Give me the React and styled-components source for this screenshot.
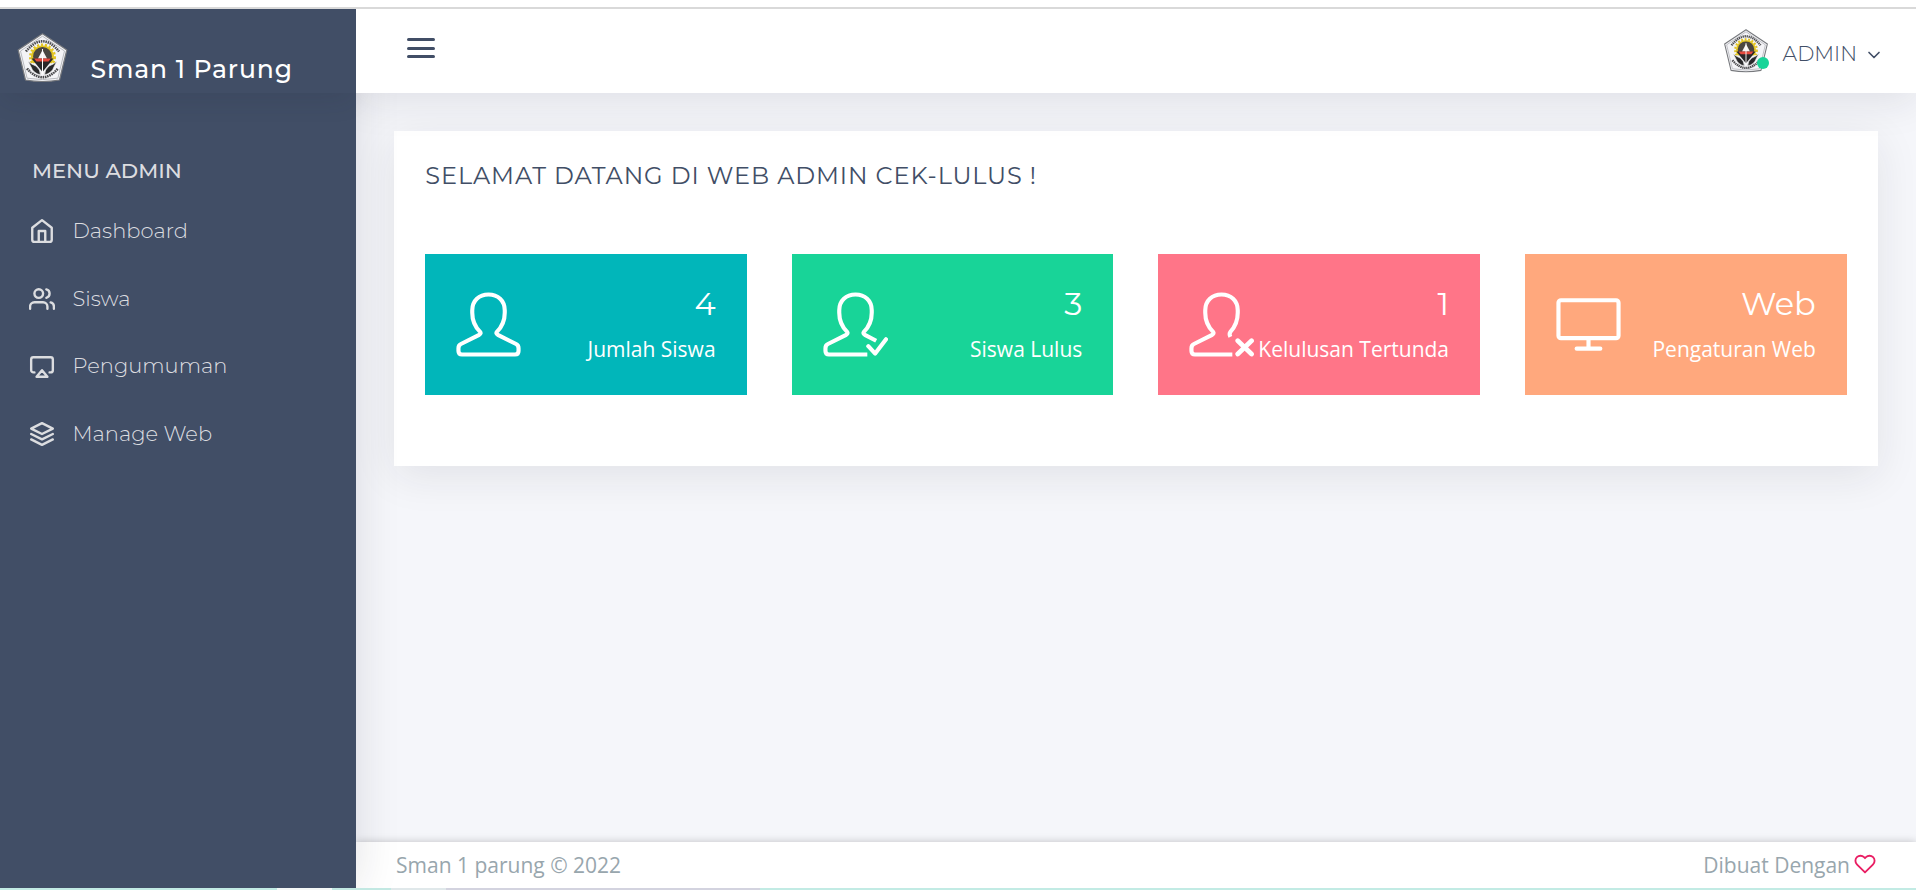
import React from "react";
import styled, { createGlobalStyle } from "styled-components";
import { ChevronDown } from "lucide-react";
import { FiHome, FiUsers, FiAirplay, FiLayers, FiHeart } from "react-icons/fi";

const heading = `Montserrat, Inter, "Open Sans", sans-serif`;
const body = `"Open Sans", "Noto Sans", sans-serif`;

const GlobalStyle = createGlobalStyle`
  * { box-sizing: border-box; }
  body { margin: 0; background: #f5f6fa; font-family: ${body}; overflow: hidden; }
  h1, h2, p { margin: 0; font-weight: 400; }
`;

const Page = styled.div`
  height: 890px;
  display: flex;
  flex-direction: column;
`;
const TopRule = styled.div`
  position: relative;
  z-index: 4;
  height: 9px;
  flex: none;
  background: #fff;
  border-bottom: 2px solid #d9d9d9;
`;
const Shell = styled.div`
  flex: 1;
  display: flex;
  min-height: 0;
`;
const Sidebar = styled.aside`
  position: relative;
  z-index: 2;
  width: 356px;
  flex: none;
  background: #414e66;
  box-shadow: 0 0 42px rgba(31, 30, 47, 0.13);
`;
const Brand = styled.div`
  height: 84px;
  display: flex;
  align-items: flex-start;
  padding: 24px 0 0 17px;
  gap: 22.5px;
  box-shadow: 0 10px 26px -4px rgba(32, 40, 55, 0.13);
`;
const BrandName = styled.span`
  font: 500 25px/32px ${heading};
  letter-spacing: 0.9px;
  padding-top: 20px;
  color: #fff;
  white-space: nowrap;
`;
const MenuTitle = styled.h2`
  font: 500 21px/28px ${heading};
  letter-spacing: 0;
  color: #dcdde0;
  margin: 64px 0 12px 32px;
`;
const MenuItem = styled.a`
  height: 67.7px;
  display: flex;
  align-items: center;
  gap: 17.5px;
  padding-left: 29px;
  color: #dcdde0;
  font: 300 21px/28px ${heading};
  svg { position: relative; top: 0.5px; }
`;
const Menu = styled.nav`
  display: flex;
  flex-direction: column;
`;
const Main = styled.div`
  flex: 1;
  min-width: 0;
  display: flex;
  flex-direction: column;
`;
const Header = styled.header`
  position: relative;
  z-index: 3;
  height: 84px;
  flex: none;
  background: #fff;
  display: flex;
  justify-content: space-between;
  box-shadow: 0 8px 40px rgba(31, 30, 47, 0.1);
  clip-path: inset(0 0 -80px 0);
`;
const MenuToggle = styled.button`
  border: 0;
  background: none;
  padding: 0;
  margin: 29px 0 0 51px;
  width: 28px;
  height: 20px;
  display: flex;
  flex-direction: column;
  justify-content: space-between;
`;
const Bar = styled.span`
  height: 3px;
  border-radius: 2px;
  background: #414e66;
`;
const Account = styled.div`
  display: flex;
  align-items: flex-start;
  padding: 20px 32px 0 0;
  color: #414e66;
`;
const Avatar = styled.div`
  position: relative;
  width: 44px;
  height: 44px;
`;
const Status = styled.i`
  position: absolute;
  right: -1px;
  bottom: 4px;
  width: 12px;
  height: 12px;
  border-radius: 50%;
  background: #18d498;
`;
const AccountName = styled.span`
  font: 300 20.7px/28px ${heading};
  margin: 11px 7px 0 15px;
`;
const Chevron = styled(ChevronDown)`
  margin-top: 16px;
`;
const Content = styled.main`
  flex: 1;
  padding: 38px 38px 0;
`;
const Panel = styled.section`
  height: 335px;
  background: #fff;
  padding: 31px 31.2px 0 30.8px;
  box-shadow: 0 10px 40px rgba(31, 30, 47, 0.09);
`;
const Title = styled.h1`
  font: 400 24px/28px ${heading};
  letter-spacing: 0.9px;
  color: #414e66;
  white-space: nowrap;
  padding-left: 0.5px;
`;
const Stats = styled.div`
  display: grid;
  grid-template-columns: repeat(4, 1fr);
  gap: 45px;
  margin-top: 64px;
`;
const StatCard = styled.article`
  height: 141px;
  background: ${(p) => p.$color};
  color: #fff;
  display: flex;
  justify-content: space-between;
  padding: 31px 31px 0;
`;
const StatIcon = styled.svg`
  width: 65px;
  height: 65px;
  flex: none;
  margin-top: 7px;
`;
const StatText = styled.div`
  text-align: right;
  white-space: nowrap;
  min-width: 0;
  display: flex;
  flex-direction: column;
  align-items: flex-end;
`;
const StatValue = styled.span`
  font: 400 32px/38px ${heading};
`;
const StatLabel = styled.span`
  font: 400 21px/30px ${body};
  margin-top: 11px;
`;
const Footer = styled.footer`
  height: 46px;
  flex: none;
  background: #fff;
  display: flex;
  justify-content: space-between;
  padding: 7px 40px 0;
  font-size: 21px;
  line-height: 32px;
  color: #98a6ad;
  box-shadow: 0 0 8px rgba(0, 0, 0, 0.22);
`;
const Credit = styled.span`
  display: flex;
  gap: 4px;
  svg { margin-top: 4px; }
`;
const Taskbar = styled.div`
  position: relative;
  z-index: 4;
  height: 2px;
  flex: none;
  background: linear-gradient(90deg, #c2ebe4 0 277px, #f4f8f7 277px 332px, #c2e8e2 332px 391px, #e0e8ea 391px 446px, #d3d3df 446px 760px, #c2ebe4 760px);
`;

const Crest = ({ width, height }) => (
  <svg width={width} height={height} viewBox="0 0 50 50">
    <path d="M25 .8 L49.3 17 L42 47 Q25 50 8 47 L.7 17 Z" fill="#f4f4f7" stroke="#77797d" strokeWidth="1.2" strokeLinejoin="round" />
    <path d="M25 3.2 L47 18 L40.4 45.2 Q25 48 9.6 45.2 L3 18 Z" fill="none" stroke="#b9bbc0" strokeWidth="1" />
    <path d="M8.5 18.5 Q25 -2 41.5 18.5" fill="none" stroke="#4c4c4f" strokeWidth="2.6" strokeDasharray="1.5 .8" />
    <path d="M9.5 35.5 Q25 53 40.5 35.5" fill="none" stroke="#4c4c4f" strokeWidth="2.6" strokeDasharray="1.6 .7" />
    <circle cx="25" cy="24" r="11.5" fill="#e3c522" />
    <circle cx="25" cy="24" r="12.3" fill="none" stroke="#e3c522" strokeWidth="2.4" strokeDasharray="2.2 1.8" />
    <path d="M11 31 Q25 28 39 31 L36 39 H14 Z" fill="#f4f4f7" />
    <circle cx="25" cy="23.5" r="9.4" fill="#4a4640" />
    <path d="M14 25.5 H36 L25 39 Z" fill="#292829" />
    <path d="M25 17 L29.5 25.5 H20.5 Z" fill="#f7f4f2" />
    <path d="M16.5 25.5 H33.5 L31 28.6 H19 Z" fill="#e5493d" />
    <path d="M25 16 V41" stroke="#fff" strokeWidth="1" />
    <path d="M10.5 28 Q14 31.5 18.5 33 Q23 36.5 23 42 Q15.5 40 13.5 34 Z M39.5 28 Q36 31.5 31.5 33 Q27 36.5 27 42 Q34.5 40 36.5 34 Z" fill="#29292b" stroke="#f8f8f8" strokeWidth=".7" />
  </svg>
);

const leftHalf = "V57Q2.5 54 5 52.8L23.5 43.5Q25.8 42 24.5 40.5C19 35 16.5 29 16.5 21V18.5C16.5 8.5 23.5 2.5 33 2.5S49.5 8.5 49.5 18.5V21";
const personPaths = {
  plain: `M60 63.5H6Q2.5 63.5 2.5 60${leftHalf}C49.5 29 47 35 41.5 40.5Q40.2 42 42.5 43.5L61 52.8Q63.5 54 63.5 57V60Q63.5 63.5 60 63.5Z`,
  check: `M45 63.5H6Q2.5 63.5 2.5 60${leftHalf}C49.5 29 47 35 41.5 40.5Q40.2 42 42.5 43.5L54 49.5`,
  cross: `M44 63.5H6Q2.5 63.5 2.5 60${leftHalf}C49.5 29 47 35 42 40.5Q40.5 42.5 42 45.5`,
};

const PersonIcon = ({ kind }) => (
  <StatIcon viewBox="0 0 66 66" fill="none" stroke="#fff" strokeWidth="4.2" strokeLinejoin="round">
    <path d={personPaths[kind]} />
    {kind === "check" && <path d="M46 55L53 62.5L64 48" strokeLinecap="round" />}
    {kind === "cross" && <path d="M49.5 49.5L63.5 63M63.5 49.5L49.5 63" strokeWidth="4.8" strokeLinecap="round" />}
  </StatIcon>
);
const MonitorIcon = () => (
  <StatIcon viewBox="0 0 66 66" fill="none" stroke="#fff" strokeWidth="4.2">
    <rect x="2.5" y="8.4" width="61" height="38.5" rx="2.5" />
    <path d="M33 46V57" />
    <path d="M21 57.5H45" strokeLinecap="round" />
  </StatIcon>
);

const menu = [
  { label: "Dashboard", Icon: FiHome },
  { label: "Siswa", Icon: FiUsers },
  { label: "Pengumuman", Icon: FiAirplay },
  { label: "Manage Web", Icon: FiLayers },
];
const stats = [
  { value: "4", label: "Jumlah Siswa", color: "#01b6ba", kind: "plain" },
  { value: "3", label: "Siswa Lulus", color: "#18d498", kind: "check" },
  { value: "1", label: "Kelulusan Tertunda", color: "#ff7588", kind: "cross" },
  { value: "Web", label: "Pengaturan Web", color: "#ffa87d" },
];

export default function App() {
  return (
    <Page>
      <GlobalStyle />
      <TopRule />
      <Shell>
        <Sidebar>
          <Brand>
            <Crest width={51} height={50} />
            <BrandName>Sman 1 Parung</BrandName>
          </Brand>
          <MenuTitle>MENU ADMIN</MenuTitle>
          <Menu>
            {menu.map(({ label, Icon }) => (
              <MenuItem key={label}>
                <Icon size={26} strokeWidth={2.2} />
                {label}
              </MenuItem>
            ))}
          </Menu>
        </Sidebar>
        <Main>
          <Header>
            <MenuToggle aria-label="Menu"><Bar /><Bar /><Bar /></MenuToggle>
            <Account>
              <Avatar><Crest width={44} height={44} /><Status /></Avatar>
              <AccountName>ADMIN</AccountName>
              <Chevron size={20} strokeWidth={2} />
            </Account>
          </Header>
          <Content>
            <Panel>
              <Title>SELAMAT DATANG DI WEB ADMIN CEK-LULUS !</Title>
              <Stats>
                {stats.map((s) => (
                  <StatCard key={s.label} $color={s.color}>
                    {s.kind ? <PersonIcon kind={s.kind} /> : <MonitorIcon />}
                    <StatText>
                      <StatValue>{s.value}</StatValue>
                      <StatLabel>{s.label}</StatLabel>
                    </StatText>
                  </StatCard>
                ))}
              </Stats>
            </Panel>
          </Content>
          <Footer>
            <span>Sman 1 parung © 2022</span>
            <Credit>Dibuat Dengan <FiHeart size={22} color="#e91e63" /></Credit>
          </Footer>
        </Main>
      </Shell>
      <Taskbar />
    </Page>
  );
}
